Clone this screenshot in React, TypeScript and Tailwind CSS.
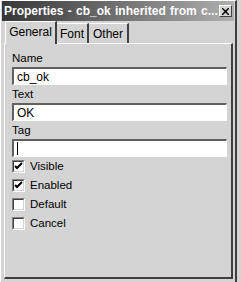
import React from "react";

const font = { fontFamily: '"Liberation Sans", Arial, sans-serif' };

function Field({ label, value, cursor }: { label: string; value: string; cursor?: boolean }) {
  return (
    <div className="flex flex-col">
      <div className="h-[17px] text-[11.5px] leading-[17px] text-black">{label}</div>
      <div className="h-[18px] w-[215px] border-t-2 border-l-2 border-t-[#606060] border-l-[#606060] border-b border-r border-b-white border-r-white bg-white flex items-center pl-[3px] text-[12px] text-black">
        {cursor ? <span className="inline-block w-px h-[13px] bg-black" /> : value}
      </div>
    </div>
  );
}

function Check({ label, checked }: { label: string; checked: boolean }) {
  return (
    <div className="flex items-center h-[19px] gap-[5px]">
      <div className="w-[13px] h-[13px] bg-white border-t border-l border-t-[#808080] border-l-[#808080] border-b border-r border-b-white border-r-white flex items-center justify-center">
        <div className="w-[11px] h-[11px] border-t border-l border-t-[#404040] border-l-[#404040] border-b border-r border-b-[#d4d4d4] border-r-[#d4d4d4] flex items-center justify-center">
          {checked && (
            <svg width="9" height="9" viewBox="0 0 9 9">
              <path d="M1 4 L3 6 L8 1" stroke="black" strokeWidth="2" fill="none" />
            </svg>
          )}
        </div>
      </div>
      <span className="text-[11.5px] text-black">{label}</span>
    </div>
  );
}

export default function App() {
  return (
    <div className="w-[241px] h-[282px] bg-[#d4d4d4] flex overflow-hidden" style={font}>
      <div className="w-[237px] h-[282px] border-l border-t border-l-white border-t-white border-r-2 border-r-[#404040] flex flex-col bg-[#d4d4d4]">
        <div className="h-[20px] mx-[1px] bg-gradient-to-r from-[#383838] to-[#b0b0b0] flex items-center pl-[2px] pr-[2px]">
          <span className="text-white font-bold text-[12px] [word-spacing:1px] whitespace-nowrap flex-1 overflow-hidden">Properties - cb_ok inherited from c...</span>
          <div className="w-[13px] h-[12px] bg-[#d4d4d4] border border-t-white border-l-white border-b-[#404040] border-r-[#404040] flex items-center justify-center">
            <svg width="7" height="7" viewBox="0 0 7 7">
              <path d="M0 0 L7 7 M7 0 L0 7" stroke="black" strokeWidth="1.5" />
            </svg>
          </div>
        </div>
        <div className="flex items-end h-[23px] pl-[4px] relative z-10">
          <div className="h-[23px] w-[52px] border-t border-l border-t-white border-l-white border-r-2 border-r-[#404040] rounded-tl-[2px] bg-[#d4d4d4] text-[12px] flex items-center justify-center pb-[2px]">General</div>
          <div className="h-[20px] w-[32px] border-t border-t-white border-r-2 border-r-[#404040] bg-[#d4d4d4] text-[12px] flex items-center justify-center mb-[1px]">Font</div>
          <div className="h-[20px] w-[40px] border-t border-t-white border-r-2 border-r-[#404040] bg-[#d4d4d4] text-[12px] flex items-center justify-center mb-[1px]">Other</div>
        </div>
        <div className="ml-[3px] mr-[2px] h-[236px] border-t border-l border-t-white border-l-white border-r-2 border-b-2 border-r-[#404040] border-b-[#404040] flex flex-col pl-[7px] pt-[6px] -mt-[1px]">
          <div className="flex flex-col gap-[1px]">
            <Field label="Name" value="cb_ok" />
            <Field label="Text" value="OK" />
            <Field label="Tag" value="" cursor />
          </div>
          <div className="flex flex-col">
            <Check label="Visible" checked />
            <Check label="Enabled" checked />
            <Check label="Default" checked={false} />
            <Check label="Cancel" checked={false} />
          </div>
        </div>
      </div>
    </div>
  );
}
